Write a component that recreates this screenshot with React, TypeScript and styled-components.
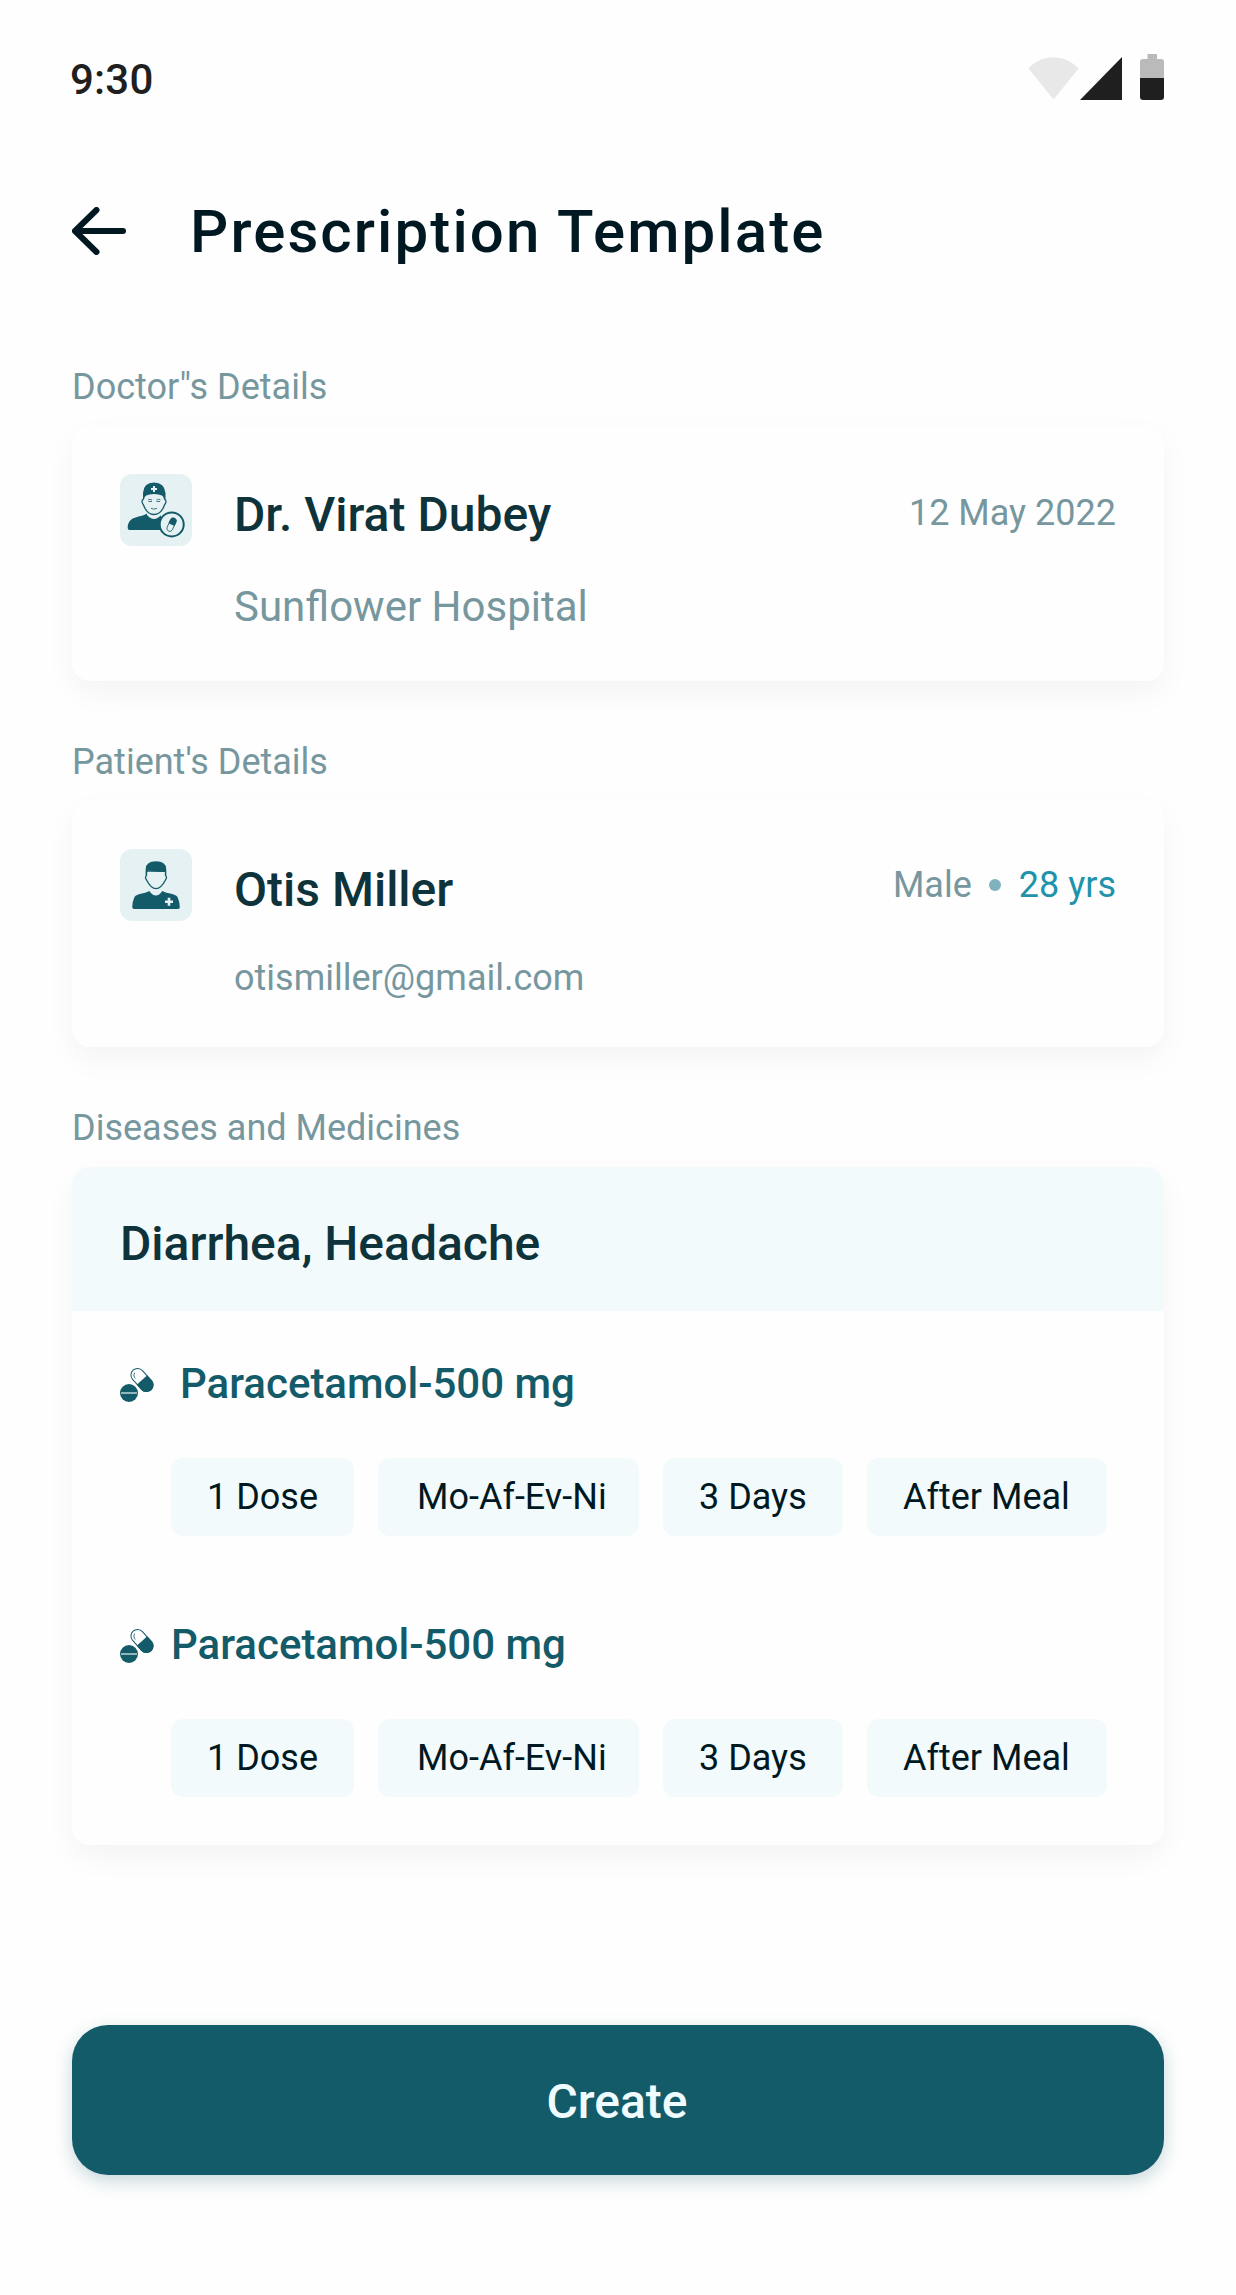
import React from "react";
import styled, { createGlobalStyle } from "styled-components";

const teal = "#145b69";

const GlobalStyle = createGlobalStyle`
  * { box-sizing: border-box; }
  body {
    margin: 0;
    background: #fefefe;
    font-family: Roboto, "Liberation Sans", sans-serif;
  }
  h1, h2, h3, p { margin: 0; font-weight: inherit; }
  svg { display: block; flex: none; }
`;

const Screen = styled.main`
  width: 1236px;
  height: 2295px;
  padding: 0 72px;
  overflow: hidden;
  background: #fefefe;
  display: flex;
  flex-direction: column;
`;

const StatusBar = styled.header`
  height: 156px;
  padding-top: 52px;
  display: flex;
  align-items: flex-start;
  justify-content: space-between;
`;

const Clock = styled.span`
  font-size: 42px;
  line-height: 56px;
  font-weight: 500;
  letter-spacing: 0.2px;
  color: #1f1f1f;
  margin-left: -2px;
`;

const TopBar = styled.div`
  height: 150px;
  margin-bottom: 57px;
  display: flex;
  align-items: center;
  gap: 64px;
`;

const Title = styled.h1`
  padding-top: 2px;
  font-size: 60px;
  line-height: 72px;
  font-weight: 500;
  letter-spacing: 2.1px;
  color: #001821;
`;

const Section = styled.section`
  margin-bottom: 57px;
  flex: none;
`;

const SectionLabel = styled.h2`
  height: 63px;
  font-size: 36px;
  line-height: 48px;
  color: #77979e;
`;

const Card = styled.article<{ $height: number }>`
  height: ${(p) => p.$height}px;
  border-radius: 18px;
  overflow: hidden;
  background: #fefefe;
  box-shadow: 0 12px 30px rgba(0, 0, 0, 0.042);
`;

const PersonCard = styled(Card)`
  display: flex;
  padding: 48px;
  gap: 42px;
`;

const PersonText = styled.div<{ $gap: number }>`
  flex: 1;
  display: flex;
  flex-direction: column;
  gap: ${(p) => p.$gap}px;
  padding-top: 12px;
`;

const Name = styled.h3`
  font-size: 48px;
  line-height: 57px;
  font-weight: 500;
  color: #0e333b;
`;

const Detail = styled.p<{ $size: number }>`
  font-size: ${(p) => p.$size}px;
  line-height: 48px;
  color: #77979e;
`;

const Meta = styled.div<{ $top: number }>`
  display: flex;
  align-items: center;
  gap: 17.5px;
  height: 48px;
  margin-top: ${(p) => p.$top}px;
  font-size: 36px;
  line-height: 48px;
  color: #77979e;
`;

const Dot = styled.i`
  width: 12px;
  height: 12px;
  border-radius: 50%;
  background: #7fb2be;
`;

const Age = styled.span`
  color: #1e93ab;
`;

const Diagnosis = styled.div`
  height: 144px;
  padding: 9px 48px 0;
  display: flex;
  align-items: center;
  background: #f2fafc;
`;

const Medicine = styled.div`
  height: 261px;
  padding: 0 48px;
`;

const MedicineHead = styled.div<{ $gap: number }>`
  height: 145px;
  margin-bottom: 2px;
  display: flex;
  align-items: center;
  gap: ${(p) => p.$gap}px;

  svg {
    margin-top: 3px;
  }
`;

const MedicineName = styled.h3`
  font-size: 42px;
  line-height: 50px;
  font-weight: 500;
  color: ${teal};
`;

const Chips = styled.div`
  display: flex;
  gap: 24px;
  padding-left: 51px;
`;

const Chip = styled.span<{ $width: number; $inset?: number }>`
  width: ${(p) => p.$width}px;
  height: 78px;
  padding-left: ${(p) => p.$inset ?? 36}px;
  border-radius: 12px;
  background: #f2fafc;
  font-size: 36px;
  line-height: 78px;
  color: #001821;
  white-space: nowrap;
  flex: none;
`;

const CreateButton = styled.button`
  height: 150px;
  margin-top: 123px;
  padding: 2px 2px 0 0;
  border: 0;
  border-radius: 36px;
  background: ${teal};
  box-shadow: 0 6px 18px rgba(21, 91, 105, 0.24);
  font: 500 48px/57px Roboto, "Liberation Sans", sans-serif;
  color: #effbff;
  flex: none;
`;

const StatusIcons = () => (
  <svg width="136" height="48" viewBox="0 0 136 48">
    <path d="M0.500 16.500C14 1.500 36 1.500 50.500 16.500L25.500 47.500Z" fill="#e8e8e8" />
    <path d="M94 5V48H52Z" fill="#1f1f1f" />
    <path d="M112 26V10Q112 7 115 7H119.500V2H129V7H133Q136 7 136 10V26H112Z" fill="#bababa" />
    <path d="M112 26H136V45Q136 48 133 48H115Q112 48 112 45Z" fill="#1f1f1f" />
  </svg>
);

const BackArrow = () => (
  <svg width="54" height="48" viewBox="0 0 54 48" fill="none" stroke="#001821" strokeWidth="6" strokeLinecap="round" strokeLinejoin="round">
    <path d="M51 24H3M24.500 3L3 24L24.500 45" />
  </svg>
);

const DoctorIcon = () => (
  <svg width="72" height="72" viewBox="0 0 72 72">
    <rect width="72" height="72" rx="12" fill="#e6f1f3" />
    <path d="M27 39.500C20 44 8 41.500 7.700 54Q7.700 56 9.500 56H41V42L39.500 39.500Z" fill={teal} />
    <path d="M27 37V41Q34 49 41 41V37Z" fill="#e6f1f3" />
    <path d="M23.500 25Q20.500 27 23.500 31Q27 40.500 34 40.500T44.500 31Q47.500 27 44.500 25L43 18H25Z" fill="#e6f1f3" stroke={teal} strokeWidth="1.300" />
    <path d="M23 26V19Q23.500 8.500 34 8.500T45.500 19V26Q44 20 34 20T23 26Z" fill={teal} />
    <path d="M34 12V18M31 15H37" stroke="#e6f1f3" strokeWidth="2" />
    <path d="M28 26Q30 24.500 32 26M36.500 26Q38.500 24.500 40.500 26M28.500 27.500H32M36.500 27.500H40M31 34.300Q34 36 37 34.300" fill="none" stroke={teal} strokeWidth=".8" />
    <circle cx="51.700" cy="50.400" r="12" fill="#e6f1f3" stroke={teal} strokeWidth="2" />
    <g transform="translate(51.500 50.700) rotate(25)">
      <rect x="-2.900" y="-7" width="5.800" height="14" rx="2.900" fill="#e6f1f3" stroke={teal} strokeWidth=".8" />
      <path d="M-3.300 0V-4.100A3.300 3.300 0 0 1 3.300-4.100V0Z" fill={teal} />
    </g>
  </svg>
);

const PatientIcon = () => (
  <svg width="72" height="72" viewBox="0 0 72 72">
    <rect width="72" height="72" rx="12" fill="#e6f1f3" />
    <path d="M29.300 42C24 45 17 44.500 14.500 48Q12.500 52 12.200 58Q12.200 60 14.200 60H58Q60 60 59.800 58Q59.500 52 57.500 48C55 44.500 48 45 42.300 42Q36 51 29.300 42Z" fill={teal} />
    <path d="M26.500 22V26.500Q24.500 27.500 26.500 31Q31 39.700 36 39.700T45.500 31Q47.500 27.500 45.500 26.500V22Z" fill="#e6f1f3" stroke={teal} strokeWidth="1.300" />
    <path d="M25.700 26.500V20Q26 12.300 36 12.300T46.200 20V26.500L45 23Q36 23.500 28 21.300Z" fill={teal} />
    <path d="M49 48.700V56.700M45 52.700H53" stroke="#e6f1f3" strokeWidth="2.600" />
  </svg>
);

const PillsIcon = () => (
  <svg width="34" height="36" viewBox="0 0 34 36">
    <g transform="translate(22 13) rotate(-42)">
      <rect x="-6.600" y="-13.300" width="13.200" height="26.600" rx="6.600" fill="#fefefe" stroke={teal} strokeWidth="1" />
      <path d="M-7.100 0H7.100V6.700A7.100 7.100 0 0 1-7.100 6.700Z" fill={teal} />
      <path d="M-3.800-5.500V-7A4 4 0 0 1-.5-10.300" fill="none" stroke={teal} strokeWidth=".8" />
    </g>
    <circle cx="9" cy="26" r="9.500" fill="#fefefe" />
    <circle cx="9" cy="26" r="9" fill={teal} />
    <path d="M1 26H17" stroke="#d9e6e9" strokeWidth="1.300" />
  </svg>
);

const medicines = [
  { name: "Paracetamol-500 mg", gap: 26 },
  { name: "Paracetamol-500 mg", gap: 17 },
];

export default function App() {
  return (
    <>
      <GlobalStyle />
      <Screen>
        <StatusBar>
          <Clock>9:30</Clock>
          <StatusIcons />
        </StatusBar>
        <TopBar>
          <BackArrow />
          <Title>Prescription Template</Title>
        </TopBar>
        <Section>
          <SectionLabel>Doctor"s Details</SectionLabel>
          <PersonCard $height={255}>
            <DoctorIcon />
            <PersonText $gap={40}>
              <Name>Dr. Virat Dubey</Name>
              <Detail $size={42}>Sunflower Hospital</Detail>
            </PersonText>
            <Meta $top={15}>12 May 2022</Meta>
          </PersonCard>
        </Section>
        <Section>
          <SectionLabel>Patient's Details</SectionLabel>
          <PersonCard $height={246}>
            <PatientIcon />
            <PersonText $gap={36}>
              <Name>Otis Miller</Name>
              <Detail $size={36}>otismiller@gmail.com</Detail>
            </PersonText>
            <Meta $top={12}>
              Male
              <Dot />
              <Age>28 yrs</Age>
            </Meta>
          </PersonCard>
        </Section>
        <Section>
          <SectionLabel>Diseases and Medicines</SectionLabel>
          <Card $height={678}>
            <Diagnosis>
              <Name>Diarrhea, Headache</Name>
            </Diagnosis>
            {medicines.map((m, i) => (
              <Medicine key={i}>
                <MedicineHead $gap={m.gap}>
                  <PillsIcon />
                  <MedicineName>{m.name}</MedicineName>
                </MedicineHead>
                <Chips>
                  <Chip $width={183}>1 Dose</Chip>
                  <Chip $width={261} $inset={39}>Mo-Af-Ev-Ni</Chip>
                  <Chip $width={180}>3 Days</Chip>
                  <Chip $width={240}>After Meal</Chip>
                </Chips>
              </Medicine>
            ))}
          </Card>
        </Section>
        <CreateButton>Create</CreateButton>
      </Screen>
    </>
  );
}
